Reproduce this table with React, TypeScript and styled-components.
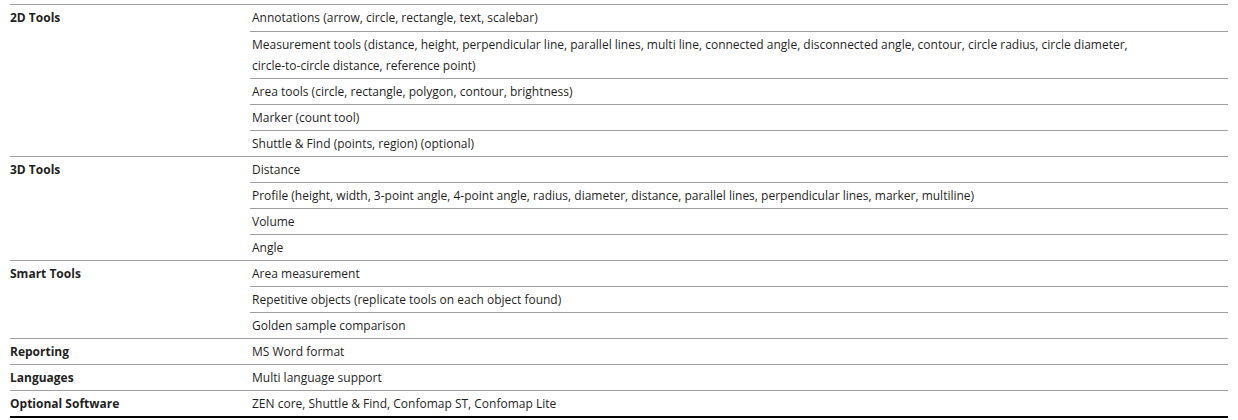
import React from "react";
import styled, { createGlobalStyle } from "styled-components";

const Global = createGlobalStyle`
  html, body { margin: 0; padding: 0; background: #ffffff; }
  body { font-family: "Open Sans", "Noto Sans", Arial, sans-serif; color: #1f1f1f; }
`;

const Page = styled.div`
  padding: 4px 10px 0 10px;
`;

const Table = styled.div`
  width: 1218px;
  border-bottom: 2px solid #000000;
`;

const Group = styled.section`
  display: grid;
  grid-template-columns: 240px 1fr;
  border-top: 1px solid #a0a0a0;
`;

const Label = styled.div`
  font-size: 12px;
  font-weight: 700;
  line-height: 21px;
  padding: 2px 0 2px 0;
`;

const Items = styled.div`
  display: flex;
  flex-direction: column;
`;

const Item = styled.div<{ $tall?: boolean }>`
  font-size: 12px;
  line-height: 21px;
  padding: 2px 0 ${(p) => (p.$tall ? 3 : 2)}px 2px;
  & + & {
    border-top: 1px solid #a0a0a0;
  }
`;

type GroupData = { label: string; items: React.ReactNode[] };

const data: GroupData[] = [
  {
    label: "2D Tools",
    items: [
      "Annotations (arrow, circle, rectangle, text, scalebar)",
      <>
        Measurement tools (distance, height, perpendicular line, parallel lines, multi line, connected angle,
        disconnected angle, contour, circle radius, circle diameter,
        <br />
        circle-to-circle distance, reference point)
      </>,
      "Area tools (circle, rectangle, polygon, contour, brightness)",
      "Marker (count tool)",
      "Shuttle & Find (points, region) (optional)",
    ],
  },
  {
    label: "3D Tools",
    items: [
      "Distance",
      "Profile (height, width, 3-point angle, 4-point angle, radius, diameter, distance, parallel lines, perpendicular lines, marker, multiline)",
      "Volume",
      "Angle",
    ],
  },
  {
    label: "Smart Tools",
    items: [
      "Area measurement",
      "Repetitive objects (replicate tools on each object found)",
      "Golden sample comparison",
    ],
  },
  { label: "Reporting", items: ["MS Word format"] },
  { label: "Languages", items: ["Multi language support"] },
  { label: "Optional Software", items: ["ZEN core, Shuttle & Find, Confomap ST, Confomap Lite"] },
];

export default function App() {
  return (
    <Page>
      <Global />
      <Table>
        {data.map((g, gi) => (
          <Group key={g.label}>
            <Label>{g.label}</Label>
            <Items>
              {g.items.map((it, i) => (
                <Item key={i} $tall={gi === 0 && i === 0}>
                  {it}
                </Item>
              ))}
            </Items>
          </Group>
        ))}
      </Table>
    </Page>
  );
}
